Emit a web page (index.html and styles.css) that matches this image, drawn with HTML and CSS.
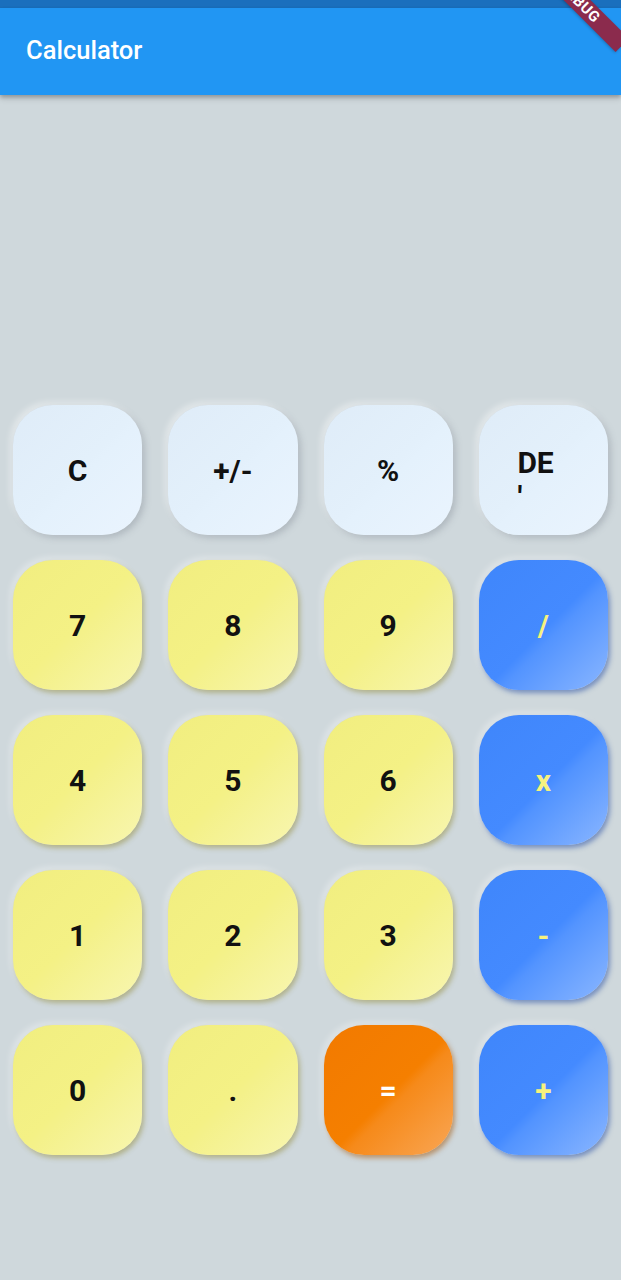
FILE: index.html
```html
<!DOCTYPE html>
<html>
<head>
<meta charset="utf-8">
<link rel="stylesheet" href="styles.css">
</head>
<body>
<div class="screen">
  <div class="status-bar"></div>
  <header class="app-bar"><h1 class="title">Calculator</h1></header>
  <main class="content">
    <div class="display"></div>
    <div class="keypad">
      <div class="key key-light">C</div>
      <div class="key key-light">+/-</div>
      <div class="key key-light">%</div>
      <div class="key key-light"><span class="wrap-label">DE<br>'</span></div>

      <div class="key key-yellow">7</div>
      <div class="key key-yellow">8</div>
      <div class="key key-yellow">9</div>
      <div class="key key-blue">/</div>

      <div class="key key-yellow">4</div>
      <div class="key key-yellow">5</div>
      <div class="key key-yellow">6</div>
      <div class="key key-blue">x</div>

      <div class="key key-yellow">1</div>
      <div class="key key-yellow">2</div>
      <div class="key key-yellow">3</div>
      <div class="key key-blue">-</div>

      <div class="key key-yellow">0</div>
      <div class="key key-yellow">.</div>
      <div class="key key-orange">=</div>
      <div class="key key-blue">+</div>
    </div>
  </main>
  <div class="debug-banner">DEBUG</div>
</div>
</body>
</html>
```

FILE: styles.css
```css
* { box-sizing: border-box; }
html, body { margin: 0; padding: 0; }
body {
  width: 621px;
  height: 1280px;
  overflow: hidden;
  background: #cfd8dc;
  font-family: Roboto, "Liberation Sans", sans-serif;
}
.screen {
  position: relative;
  width: 621px;
  height: 1280px;
  overflow: hidden;
  display: flex;
  flex-direction: column;
}
.status-bar {
  height: 8px;
  background: #1a6fbd;
  flex: none;
}
.app-bar {
  height: 87px;
  flex: none;
  background: #2196f3;
  display: flex;
  align-items: center;
  padding: 0 26px 4px;
  box-shadow: 0 2px 4px rgba(0,0,0,0.22), 0 4px 6px rgba(0,0,0,0.12);
  position: relative;
  z-index: 1;
}
.title {
  margin: 0;
  color: #fff;
  font-size: 25.5px;
  font-weight: 500;
  letter-spacing: 0;
}
.content {
  flex: 1;
  display: flex;
  flex-direction: column;
}
.display {
  height: 310px;
  flex: none;
}
.keypad {
  display: grid;
  grid-template-columns: repeat(4, 1fr);
  grid-auto-rows: 130px;
  column-gap: 26px;
  row-gap: 25px;
  padding: 0 13px;
}
.key {
  border-radius: 40px;
  display: flex;
  align-items: center;
  justify-content: center;
  font-size: 30px;
  font-weight: 700;
  color: #111;
}
.key-light {
  background: linear-gradient(135deg, #dfecf8 0%, #e3f0fb 50%, #e4f1fc 55%, #eaf4fe 100%);
  box-shadow: 3px 3px 6px rgba(120,130,140,0.35), -3px -3px 6px rgba(255,255,255,0.45);
}
.key-yellow {
  background: linear-gradient(135deg, #f1ee80 0%, #f4f185 50%, #f4f18a 55%, #f8f6b0 100%);
  box-shadow: 2px 3px 5px rgba(140,130,40,0.45), -3px -3px 6px rgba(255,255,255,0.35);
}
.key-blue {
  color: #f6f27e;
  background: linear-gradient(135deg, #3f86fb 0%, #448aff 52%, #5394ff 58%, #8ab6ff 100%);
  box-shadow: 2px 3px 5px rgba(30,70,160,0.5), -3px -3px 6px rgba(255,255,255,0.35);
}
.key-orange {
  color: #fff;
  background: linear-gradient(135deg, #f27a00 0%, #f57f00 52%, #f68a1a 58%, #f9a655 100%);
  box-shadow: 2px 3px 5px rgba(160,80,0,0.5), -3px -3px 6px rgba(255,255,255,0.35);
}
.wrap-label {
  display: block;
  width: 52px;
  text-align: left;
  line-height: 34px;
  padding-top: 20px;
}
.debug-banner {
  position: absolute;
  left: 519px;
  top: -7px;
  width: 121px;
  height: 19px;
  transform: rotate(45deg);
  background: #8b2b4d;
  color: #fff;
  font-size: 15px;
  font-weight: 700;
  line-height: 19px;
  text-align: center;
  letter-spacing: 0.5px;
  z-index: 5;
  box-shadow: 0 1px 3px rgba(0,0,0,0.25);
}
```
